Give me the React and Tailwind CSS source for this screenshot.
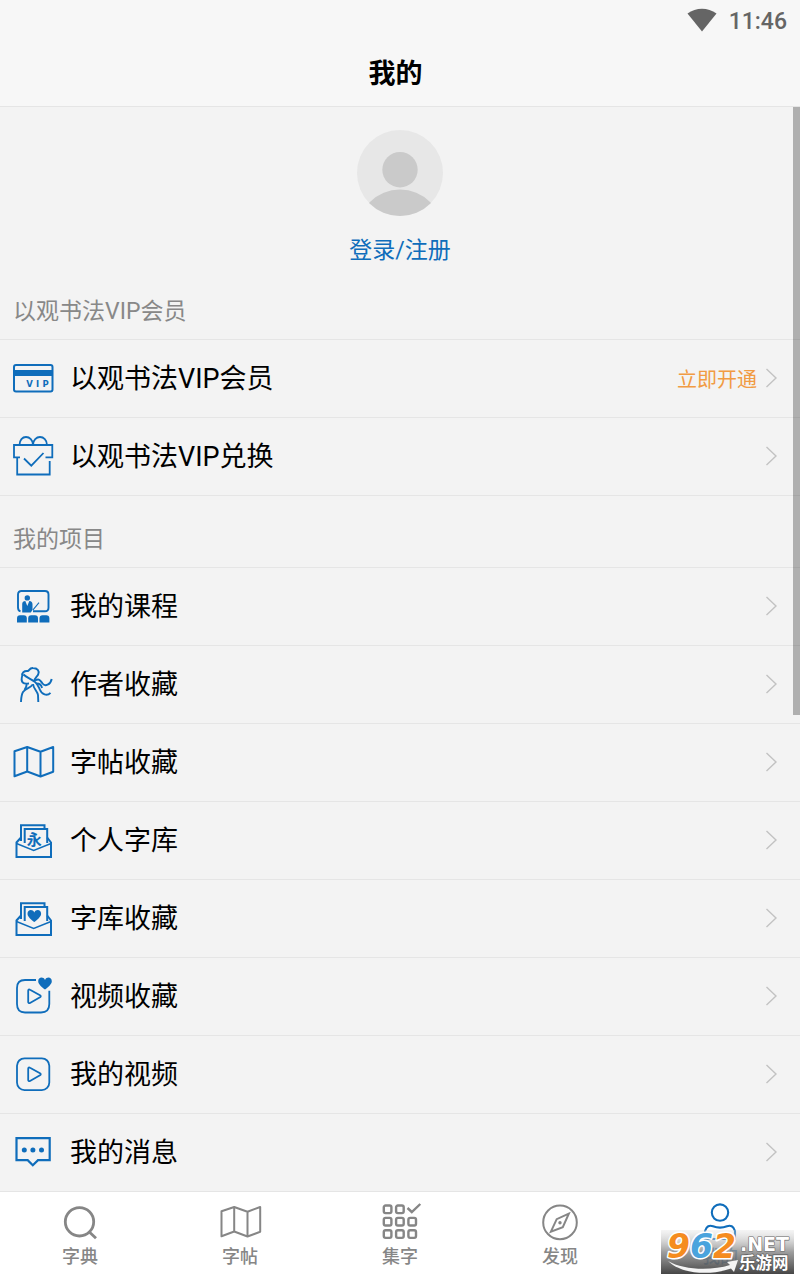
import React from "react";

const FONT = "font-[Roboto,'Noto_Sans_CJK_SC',sans-serif]";

const HEART =
  "M0 6 C-3 3.6 -6.8 0.8 -6.8 -2.3 C-6.8 -6.4 -1.8 -7.2 0 -3.6 C1.8 -7.2 6.8 -6.4 6.8 -2.3 C6.8 0.8 3 3.6 0 6 Z";

const Icon = ({ children, width = 2 }) => (
  <svg
    viewBox="0 0 40 40"
    className="size-10 shrink-0 overflow-visible"
    fill="none"
    stroke="currentColor"
    strokeWidth={width}
    aria-hidden="true"
  >
    {children}
  </svg>
);

const VipCardIcon = () => (
  <Icon>
    <rect x="1" y="7" width="38.5" height="26.5" rx="2" />
    <path d="M1 12h38.5v6H1z" fill="currentColor" stroke="none" />
    <g
      textAnchor="middle"
      fontFamily="DejaVu Sans, sans-serif"
      fontWeight="700"
      fontSize="8.5"
      fill="currentColor"
      stroke="none"
    >
      <text x="16.500" y="28.500">V</text>
      <text x="24.500" y="28.500">I</text>
      <text x="32.500" y="28.500">P</text>
    </g>
  </Icon>
);

const GiftIcon = () => (
  <Icon width={1.8}>
    <path d="M6.5 9C6.5 4 9.5 1 13 1S20 4 20 9C20 4 23.5 1 27 1S34 4 34 9" />
    <path d="M7 21.3H1V9H39.3V21.3H32.5" />
    <path d="M4.2 21.5V38.5H36.7V25" />
    <path d="M11 22.5L18.3 29.700L30.5 17" />
  </Icon>
);

const CourseIcon = () => (
  <Icon width={1.9}>
    <path d="M7.5 25.3C6 25 5 24 5 21.5V8.5C5 6 6.5 5 8.5 5H32C34.5 5 35.500 6.5 35.500 8.5V21.800C35.500 24 34.5 25.3 32 25.3H20" />
    <path d="M26 16.7L20 23.8" strokeWidth="1.1" />
    <g fill="currentColor" stroke="none">
      <circle cx="14.3" cy="11.9" r="2.7" />
      <path d="M9.2 26.5V18C9.2 16 10.5 15.3 12.3 15L14.3 20L16.3 15C18.5 15.3 19.5 16.2 19.5 18.5V24L17.8 26.5Z" />
      <path d="M4 36.4V32.5Q4 29.3 7 29.3H10.8Q13.8 29.3 13.8 32.5V36.4Z" />
      <path d="M15.2 36.4V32.5Q15.2 29.3 18.2 29.3H22Q25 29.3 25 32.5V36.4Z" />
      <path d="M26.5 36.4V32.5Q26.5 29.3 29.5 29.3H33.3Q36.400 29.3 36.400 32.5V36.4Z" />
    </g>
  </Icon>
);

const DancerIcon = () => (
  <Icon width={1.9}>
    <path d="M9.5 11.5C8.5 9 11 6.7 14.5 7C16.5 7.2 16 3.8 20 4C24.5 4 26.500 7 25.3 10C24.8 12.5 21.500 13.5 21.500 17" />
    <path d="M9.7 10.5C8.3 14 8 16.5 9.8 18.500C11.5 20.3 13.500 19.5 16 19.5" />
    <path d="M10.5 10.5C14 14 19 15 22.2 18.2C25.500 21.500 25.500 22.500 26.8 25.500C28.8 30.500 34 32.500 37.500 28.800" />
    <path d="M22 16.500C27 14 27.5 17 29.5 19.5C32 22.8 37.5 21 38.700 15" />
    <path d="M23.500 19.500C27 19.500 28.500 21 29 24" />
    <path d="M19.500 20.500C18 24 12.5 24 10 28C8.2 31 8.2 34 8 38" />
    <path d="M13.5 20C14 22 13 23.5 11.5 26" />
    <path d="M20 20C20.5 25 24.5 27 25 31L25.3 38" />
  </Icon>
);

const MapIcon = ({ width = 2 }) => (
  <Icon width={width}>
    <path
      strokeLinejoin="round"
      d="M1.5 9.2L14.2 5L27.5 9.7L40.2 5V29.8L27.5 34.5L14.2 29.5L1.5 34.3ZM14.2 5V29.5M27.5 9.7V34.5"
    />
  </Icon>
);

const Envelope = ({ children }) => (
  <Icon width={2}>
    <path d="M8 21V5.3H31.5V8" />
    <path d="M11.7 23V9H34.2V23" />
    <path d="M8 17.5L3.5 22.5V37H38V22.5L34.2 17.5" />
    <path d="M3.5 23.5L20.7 30.5L38 23.5" strokeWidth="1.4" />
    {children}
  </Icon>
);

const CharLibraryIcon = () => (
  <Envelope>
    <text
      x="21.3"
      y="24.5"
      textAnchor="middle"
      fontFamily="Noto Sans CJK SC, sans-serif"
      fontWeight="700"
      fontSize="15"
      fill="currentColor"
      stroke="none"
    >
      永
    </text>
  </Envelope>
);

const LibraryFavIcon = () => (
  <Envelope>
    <path d={HEART} transform="translate(21.3 18)" fill="currentColor" stroke="none" />
  </Envelope>
);

const PlayShape = () => (
  <path
    strokeLinejoin="round"
    d="M15.2 14.8C15.2 13.6 16 13.2 17 13.8L27 19.3C28 19.9 28 20.7 27 21.3L17 27C16 27.5 15.2 27 15.2 26Z"
  />
);

const VideoFavIcon = () => (
  <Icon width={1.8}>
    <path d="M23 4H12C6.5 4 4 7 4 12V28C4 33.5 7 36.5 12 36.5H28C33.5 36.5 36.3 33.5 36.3 28V14.7" />
    <PlayShape />
    <path d={HEART} transform="translate(32 7.5)" fill="currentColor" stroke="none" />
  </Icon>
);

const VideoIcon = () => (
  <Icon width={1.8}>
    <rect x="4" y="4.3" width="32.3" height="31.8" rx="7.5" />
    <PlayShape />
  </Icon>
);

const MessageIcon = () => (
  <Icon width={2.2}>
    <path d="M3.5 6.2H36.7V28.2H25L19.8 33.2L14.7 28.2H3.5Z" />
    <g fill="currentColor" stroke="none">
      <circle cx="11.3" cy="18" r="2.5" />
      <circle cx="19.9" cy="18" r="2.5" />
      <circle cx="28.5" cy="18" r="2.5" />
    </g>
  </Icon>
);

const SearchIcon = () => (
  <Icon width={2.8}>
    <circle cx="19.5" cy="19.8" r="14.2" />
    <path d="M28.8 29.5L36 36.3" />
  </Icon>
);

const GridIcon = () => (
  <Icon width={2.4}>
    {[3.5, 15.9, 28.3].map((y, row) =>
      [3.8, 16.1, 28.4].map((x, col) =>
        row === 0 && col === 2 ? null : (
          <rect key={x} x={x} y={y} width="7.6" height="7.6" rx="1.8" />
        )
      )
    )}
    <path d="M27.5 6L31.8 10L40.3 2" />
  </Icon>
);

const CompassIcon = () => (
  <Icon width={2}>
    <circle cx="20" cy="20.4" r="16.8" />
    <path d="M28.8 11.7L16.7 17.2L10.9 29.6L22.8 25.1Z" />
    <circle cx="20" cy="20.7" r="1.7" fill="currentColor" stroke="none" />
  </Icon>
);

const UserIcon = () => (
  <Icon width={2.1}>
    <circle cx="20" cy="10.6" r="8.2" />
    <path d="M5 29C6.5 24 9.5 23 13 24.2C17.5 26 22.5 26 27 24.2C30.5 23 33.5 24 35 29V37H5Z" />
  </Icon>
);

const sections = [
  {
    title: "以观书法VIP会员",
    items: [
      { label: "以观书法VIP会员", icon: VipCardIcon, note: "立即开通" },
      { label: "以观书法VIP兑换", icon: GiftIcon },
    ],
  },
  {
    title: "我的项目",
    items: [
      { label: "我的课程", icon: CourseIcon },
      { label: "作者收藏", icon: DancerIcon },
      { label: "字帖收藏", icon: MapIcon },
      { label: "个人字库", icon: CharLibraryIcon },
      { label: "字库收藏", icon: LibraryFavIcon },
      { label: "视频收藏", icon: VideoFavIcon },
      { label: "我的视频", icon: VideoIcon },
      { label: "我的消息", icon: MessageIcon },
    ],
  },
];

const tabs = [
  { label: "字典", icon: SearchIcon },
  { label: "字帖", icon: MapIcon },
  { label: "集字", icon: GridIcon },
  { label: "发现", icon: CompassIcon },
  { label: "我的", icon: UserIcon, active: true },
];

const StatusBar = () => (
  <div className="flex h-10 items-center justify-end gap-3 pr-[13px] text-[#656565]">
    <svg viewBox="0 0 30 24" className="h-6 w-[30px]" fill="currentColor" aria-hidden="true">
      <path d="M0.5 5.5C9 -1 21 -1 29.5 5.5L15 23.5Z" />
    </svg>
    <span className="pt-1 text-[23px] font-medium">11:46</span>
  </div>
);

const MenuRow = ({ item }) => {
  const RowIcon = item.icon;
  return (
    <li>
      <a
        href="#"
        className="flex h-[78px] items-center border-b border-[#e5e5e5] pr-[23px] pb-px pl-[13px]"
      >
        <span className="text-[#0f6dbb]">
          <RowIcon />
        </span>
        <span className="ml-[17px] flex-1 pt-[3px] text-[27px] text-black">{item.label}</span>
        {item.note && (
          <span className="mr-2 pt-[3px] text-xl text-[#f19b43]">{item.note}</span>
        )}
        <svg
          viewBox="0 0 12 20"
          className="h-5 w-3 shrink-0"
          fill="none"
          stroke="#c2c2c2"
          strokeWidth="1.4"
          aria-hidden="true"
        >
          <path d="M1.5 1L11 10L1.5 19" />
        </svg>
      </a>
    </li>
  );
};

const Watermark = () => (
  <svg
    viewBox="0 0 133 44"
    className="absolute right-[6px] bottom-[6px] h-11 w-[133px] overflow-visible"
  >
    <defs>
      <linearGradient id="shade" x1="0" y1="0" x2="0" y2="1">
        <stop offset="0" stopColor="#dcdcdc" stopOpacity="0.3" />
        <stop offset="0.5" stopColor="#8c8c8c" stopOpacity="0.85" />
        <stop offset="1" stopColor="#404040" stopOpacity="0.97" />
      </linearGradient>
    </defs>
    <rect width="133" height="44" fill="url(#shade)" />
    <path
      d="M7 31C22 40 50 41 69 35L66 32L77 30L73 42L70 38.5C49 46 20 44 7 31Z"
      fill="#f4f4f4"
    />
    <g
      fontFamily="DejaVu Sans, sans-serif"
      fontWeight="700"
      strokeLinejoin="round"
      paintOrder="stroke"
    >
      <text x="6" y="28" fontSize="33" fontStyle="italic" stroke="#ffffff" strokeWidth="3">
        <tspan fill="#f58c1f">9</tspan>
        <tspan fill="#4aa3dd">6</tspan>
        <tspan fill="#f58c1f">2</tspan>
      </text>
      <text x="79" y="21" fontSize="19" fill="#ffffff" stroke="#666666" strokeWidth="1.2">
        .NET
      </text>
    </g>
    <text
      x="78"
      y="39"
      fontSize="16.5"
      fontFamily="Noto Sans CJK SC, sans-serif"
      fontWeight="700"
      fill="#ffffff"
      stroke="#555555"
      strokeWidth="1.2"
      paintOrder="stroke"
    >
      乐游网
    </text>
  </svg>
);

const TabBar = () => (
  <nav className="relative grid grid-cols-5 bg-white">
    {tabs.map(({ label, icon: TabIcon, active }) => (
      <a
        key={label}
        href="#"
        aria-current={active ? "page" : undefined}
        className={`flex flex-col items-center pt-[10px] pb-2 ${
          active ? "text-[#0f6dbb]" : "text-[#868686]"
        }`}
      >
        <TabIcon />
        <span className="text-lg leading-[30px] font-medium">{label}</span>
      </a>
    ))}
    <Watermark />
  </nav>
);

const App = () => (
  <div className={`flex min-h-screen flex-col bg-[#f3f3f3] ${FONT}`}>
    <header className="border-b border-[#e5e5e5] bg-[#f7f7f7]">
      <StatusBar />
      <h1 className="flex h-[66px] items-center justify-center pt-[3px] pr-[9px] text-[27px] font-bold text-black">
        我的
      </h1>
    </header>

    <main className="relative flex-1">
      <section className="flex flex-col items-center pt-[23px]">
        <svg viewBox="0 0 86 86" className="size-[86px]" aria-hidden="true">
          <defs>
            <clipPath id="avatar">
              <circle cx="43" cy="43" r="43" />
            </clipPath>
          </defs>
          <g clipPath="url(#avatar)">
            <rect width="86" height="86" fill="#e7e7e7" />
            <circle cx="43" cy="39.7" r="17.7" fill="#cacaca" />
            <circle cx="43" cy="102" r="42.5" fill="#cacaca" />
          </g>
        </svg>
        <a href="#" className="mt-[18px] text-[23px] leading-[34px] text-[#0f6dbb]">
          登录/注册
        </a>
      </section>

      {sections.map((section) => (
        <section key={section.title}>
          <h2 className="border-b border-[#e5e5e5] px-[13px] pt-[29px] pb-3 text-[23px] leading-[30px] text-[#888888]">
            {section.title}
          </h2>
          <ul>
            {section.items.map((item) => (
              <MenuRow key={item.label} item={item} />
            ))}
          </ul>
        </section>
      ))}

      {/* scroll thumb */}
      <div className="absolute top-0 right-0 h-[56%] w-[7px] bg-black/28" />
    </main>

    <TabBar />
  </div>
);

export default App;
